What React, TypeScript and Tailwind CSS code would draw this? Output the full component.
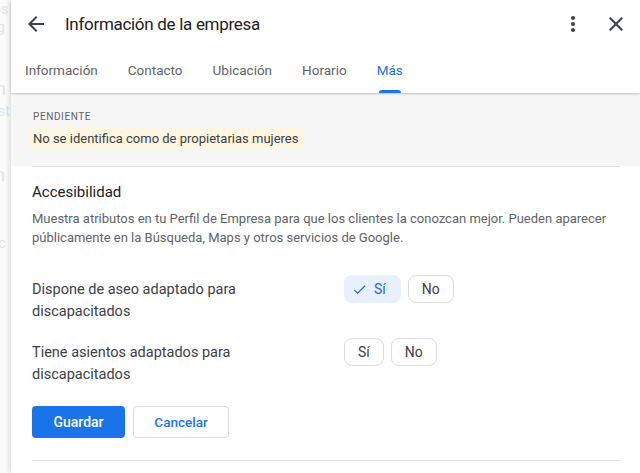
import { useState } from 'react'

const font = "font-['Roboto','Liberation_Sans',sans-serif]"

function ArrowBack() {
  return (
    <svg viewBox="0 0 24 24" className="h-6 w-6 fill-[#3c4043]">
      <path d="M20 11H7.83l5.59-5.59L12 4l-8 8 8 8 1.41-1.41L7.83 13H20v-2z" />
    </svg>
  )
}

function MoreVert() {
  return (
    <svg viewBox="0 0 24 24" className="h-6 w-6 fill-[#3c4043]">
      <path d="M12 8c1.1 0 2-.9 2-2s-.9-2-2-2-2 .9-2 2 .9 2 2 2zm0 2c-1.1 0-2 .9-2 2s.9 2 2 2 2-.9 2-2-.9-2-2-2zm0 6c-1.1 0-2 .9-2 2s.9 2 2 2 2-.9 2-2-.9-2-2-2z" />
    </svg>
  )
}

function Close() {
  return (
    <svg viewBox="0 0 24 24" className="h-6 w-6 fill-[#3c4043]">
      <path d="M19 6.41L17.59 5 12 10.59 6.41 5 5 6.41 10.59 12 5 17.59 6.41 19 12 13.41 17.59 19 19 17.59 13.41 12z" />
    </svg>
  )
}

function Check() {
  return (
    <svg viewBox="0 0 24 24" className="h-[15px] w-[15px]" fill="none" stroke="#1967d2" strokeWidth="1.8">
      <path d="M3.5 12.5l5.5 5.5L21 6" />
    </svg>
  )
}

const tabs = ['Información', 'Contacto', 'Ubicación', 'Horario', 'Más']

interface AttributeRowProps {
  label: string
  value: boolean | null
  onChange: (v: boolean) => void
}

function AttributeRow({ label, value, onChange }: AttributeRowProps) {
  const chip = 'flex h-[28px] items-center rounded-[8px] text-[14px]'
  return (
    <div className="grid grid-cols-[312px_auto] items-start">
      <p className="max-w-[250px] pt-[4px] text-[14.5px] leading-[22px] text-[#3c4043]">{label}</p>
      <div className="flex gap-[7px]">
        {value === true ? (
          <button
            onClick={() => onChange(true)}
            className={`${chip} gap-[7px] bg-[#e8f0fe] pl-[8px] pr-[15px] text-[#1967d2]`}
          >
            <Check />
            Sí
          </button>
        ) : (
          <button
            onClick={() => onChange(true)}
            className={`${chip} border border-[#dadce0] px-[13px] text-[#3c4043]`}
          >
            Sí
          </button>
        )}
        <button
          onClick={() => onChange(false)}
          className={`${chip} border border-[#dadce0] px-[13px] text-[#3c4043]`}
        >
          No
        </button>
      </div>
    </div>
  )
}

export default function App() {
  const [active, setActive] = useState('Más')
  const [aseo, setAseo] = useState<boolean | null>(true)
  const [asientos, setAsientos] = useState<boolean | null>(null)

  return (
    <div className={`flex h-[473px] w-[640px] overflow-hidden bg-white ${font}`}>
      {/* page behind the dialog */}
      <div className="flex w-[11px] shrink-0 flex-col overflow-hidden bg-[#fbfbfb] text-[14px] leading-[18px] text-[#e3e3e3] whitespace-nowrap">
        <span className="-ml-[7px]">os</span>
        <span className="-ml-[3px]">g</span>
        <span className="-ml-[4px] mt-[44px] text-[18px]">n</span>
        <span className="-ml-[10px] mt-[4px] text-[#d6e4f8]">nst</span>
        <span className="-ml-[5px] mt-[46px] text-[18px]">n</span>
        <span className="-ml-[12px] mt-[50px]">vic</span>
      </div>

      <div className="relative z-10 flex flex-1 flex-col shadow-[-2px_0_5px_rgba(0,0,0,0.12)]">
        <header className="relative z-10 shadow-[0_1px_2px_rgba(0,0,0,0.22)]">
          <div className="flex h-[48px] items-center pl-[13px] pr-[12px]">
            <button className="flex h-6 w-6 items-center justify-center">
              <ArrowBack />
            </button>
            <h1 className="ml-[17px] flex-1 pt-[2px] text-[17px] tracking-[-0.3px] text-[#202124]">
              Información de la empresa
            </h1>
            <button className="flex h-6 w-6 items-center justify-center">
              <MoreVert />
            </button>
            <button className="ml-[19px] flex h-6 w-6 items-center justify-center">
              <Close />
            </button>
          </div>
          <nav className="flex h-[45px] gap-[30px] pl-[14px]">
            {tabs.map((t) => (
              <button key={t} onClick={() => setActive(t)} className="flex flex-col">
                <span
                  className={`flex flex-1 items-center pt-[3px] text-[13.5px] ${
                    active === t ? 'text-[#1a73e8]' : 'text-[#5f6368]'
                  }`}
                >
                  {t}
                </span>
                <span
                  className={`mx-[2px] h-[3px] rounded-t-[3px] ${active === t ? 'bg-[#1a73e8]' : 'bg-transparent'}`}
                />
              </button>
            ))}
          </nav>
        </header>

        <section className="bg-[#f6f6f6] px-[17px] pb-[16px] pt-[17px]">
          <p className="pl-[5px] text-[10px] leading-[14px] tracking-[0.6px] text-[#5f6368]">PENDIENTE</p>
          <p className="mt-[3px] inline-block bg-[#fdf6e1] px-[5px] text-[13px] leading-[23px] text-[#3c4043]">
            No se identifica como de propietarias mujeres
          </p>
        </section>
        <div className="ml-[21px] mr-[20px] h-px bg-[#e3e3e3]" />

        <div className="px-[21px]">
          <h2 className="mt-[13px] text-[15px] leading-[24px] text-[#202124]">Accesibilidad</h2>
          <p className="mt-[5px] text-[13px] leading-[19px] text-[#5f6368]">
            Muestra atributos en tu Perfil de Empresa para que los clientes la conozcan mejor. Pueden aparecer
            públicamente en la Búsqueda, Maps y otros servicios de Google.
          </p>

          <div className="mt-[28px] flex flex-col gap-[15px]">
            <AttributeRow label="Dispone de aseo adaptado para discapacitados" value={aseo} onChange={setAseo} />
            <AttributeRow label="Tiene asientos adaptados para discapacitados" value={asientos} onChange={setAsientos} />
          </div>

          <div className="mt-[20px] flex gap-[8px]">
            <button className="h-[32px] w-[93px] rounded-[4px] bg-[#1a73e8] text-[14px] font-medium text-white">
              Guardar
            </button>
            <button className="h-[32px] w-[96px] rounded-[4px] border border-[#dadce0] text-[13.5px] font-medium text-[#1a73e8]">
              Cancelar
            </button>
          </div>
        </div>
        <div className="ml-[21px] mr-[20px] mt-[22px] h-px bg-[#e3e3e3]" />
      </div>
    </div>
  )
}
